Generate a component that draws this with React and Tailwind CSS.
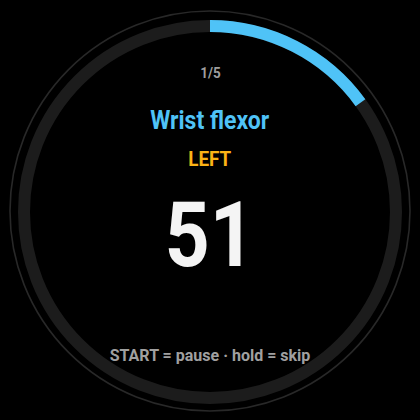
import React from "react";

function Ring() {
  const cx = 210, cy = 212, r = 186;
  const frac = 9 / 60;
  const a = frac * 2 * Math.PI;
  const ex = cx + r * Math.sin(a);
  const ey = cy - r * Math.cos(a);
  return (
    <svg className="absolute inset-0" width="420" height="420" viewBox="0 0 420 420">
      <circle cx={cx} cy={cy - 1} r="200" fill="none" stroke="#282828" strokeWidth="1.6" />
      <circle cx={cx} cy={cy} r={r} fill="none" stroke="#1c1c1c" strokeWidth="12" />
      <path d={`M ${cx} ${cy - r} A ${r} ${r} 0 0 1 ${ex} ${ey}`} fill="none" stroke="#4fc3f7" strokeWidth="12" />
    </svg>
  );
}

export default function App() {
  return (
    <div className="relative w-[420px] h-[420px] bg-black overflow-hidden" style={{ fontFamily: "Roboto, 'Liberation Sans', sans-serif" }}>
      <Ring />
      <div className="relative flex flex-col items-center font-bold">
        <div className="mt-[66px] text-[15px] leading-[15px] text-[#9e9e9e] scale-x-[0.9]">1/5</div>
        <div className="mt-[27px] text-[25px] leading-[25px] text-[#4fc3f7] scale-x-[0.92]">Wrist flexor</div>
        <div className="mt-[16px] text-[20px] leading-[20px] text-[#fbb316] scale-x-[0.94]">LEFT</div>
        <div className="mt-[22px] text-[90px] leading-[90px] text-[#f4f4f4] scale-x-[0.87]">51</div>
        <div className="mt-[67px] text-[16px] leading-[16px] text-[#a0a0a0] whitespace-nowrap">START = pause · hold = skip</div>
      </div>
    </div>
  );
}
